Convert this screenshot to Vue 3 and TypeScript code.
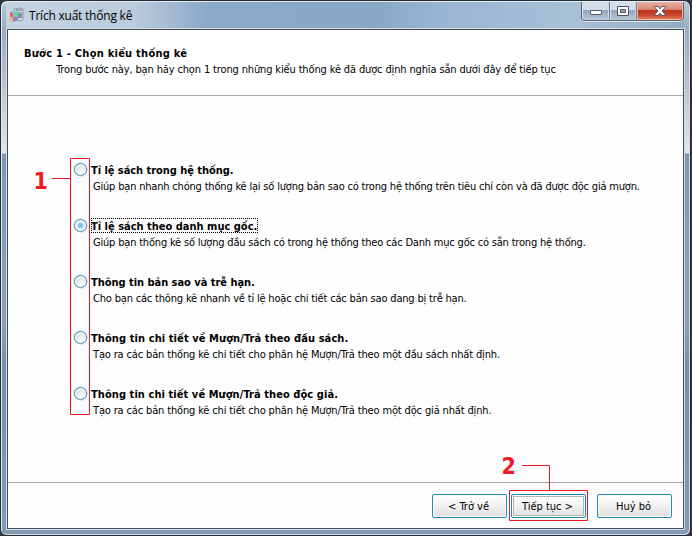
<script setup lang="ts">
import { ref } from 'vue'

interface ReportOption {
  id: string
  title: string
  description: string
}

const options: ReportOption[] = [
  { id: 'ratio', title: 'Tỉ lệ sách trong hệ thống.', description: 'Giúp bạn nhanh chóng thống kê lại số lượng bản sao có trong hệ thống trên tiêu chí còn và đã được độc giả mượn.' },
  { id: 'category', title: 'Tỉ lệ sách theo danh mục gốc.', description: 'Giúp bạn thống kê số lượng đầu sách có trong hệ thống theo các Danh mục gốc có sẵn trong hệ thống.' },
  { id: 'overdue', title: 'Thông tin bản sao và trễ hạn.', description: 'Cho bạn các thông kê nhanh về tỉ lệ hoặc chi tiết các bản sao đang bị trễ hạn.' },
  { id: 'by-title', title: 'Thông tin chi tiết về Mượn/Trả theo đầu sách.', description: 'Tạo ra các bản thống kê chi tiết cho phân hệ Mượn/Trả theo một đầu sách nhất định.' },
  { id: 'by-reader', title: 'Thông tin chi tiết về Mượn/Trả theo độc giả.', description: 'Tạo ra các bản thống kê chi tiết cho phân hệ Mượn/Trả theo một độc giả nhất định.' },
]

const selected = ref('category')
</script>

<template>
  <div class="window">
    <header class="titlebar">
      <svg class="app-icon" width="16" height="16" viewBox="0 0 16 16">
        <path d="M5 2l6-1 3 1v11l-4 1-5-2z" fill="#d4d9df" stroke="#77818f" stroke-width=".7" />
        <path d="M7 3h6M8 6h5" stroke="#67758c" />
        <rect x="8" y="7" width="5" height="4" fill="#8e88a5" />
        <path d="M1 5l5-2 3 2v8l-5 2-3-2z" fill="#8cc7dc" />
        <path d="M1 5l3 1v4H1z" fill="#ed5a77" />
        <path d="M1 10h3v5l-3-2z" fill="#e9b94c" />
        <path d="M4 6l5-1v5H4z" fill="#65d6a6" />
        <path d="M4 10h5v3l-5 2z" fill="#9d79d6" />
      </svg>
      <span class="caption">Trích xuất thống kê</span>
      <div class="controls">
        <button class="control minimize" aria-label="Minimize">
          <svg width="14" height="12" viewBox="0 0 14 12"><rect x="1.5" y="4.5" width="11" height="4" rx=".5" fill="#fff" stroke="#535666" /></svg>
        </button>
        <button class="control maximize" aria-label="Maximize">
          <svg width="14" height="12" viewBox="0 0 14 12"><path d="M1.5 1.500h11v9h-11zM4.500 4.500v3h5v-3z" fill="#fff" fill-rule="evenodd" stroke="#535666" /></svg>
        </button>
        <button class="control close" aria-label="Close">
          <svg width="14" height="12" viewBox="0 0 14 12"><path d="M2 1.500h3l2 2.300 2-2.300h3v1L9.200 6l2.800 3.500v1H9L7 8.200 5 10.500H2v-1L4.800 6 2 2.500z" fill="#fff" stroke="#535666" /></svg>
        </button>
      </div>
    </header>

    <main class="client">
      <section class="intro">
        <h1>Bước 1 - Chọn kiểu thống kê</h1>
        <p>Trong bước này, bạn hãy chọn 1 trong những kiểu thống kê đã được định nghĩa sẵn dưới đây để tiếp tục</p>
      </section>

      <section class="choices">
        <div v-for="option in options" :key="option.id" class="choice" :class="option.id" @click="selected = option.id">
          <span class="radio" :class="{ checked: selected === option.id }"></span>
          <div class="copy">
            <span class="label" :class="{ focused: selected === option.id }">{{ option.title }}</span>
            <span class="description">{{ option.description }}</span>
          </div>
        </div>
      </section>

      <footer class="actions">
        <button class="action"><span>&lt; Trở về</span></button>
        <button class="action primary"><span>Tiếp tục &gt;</span></button>
        <button class="action cancel"><span>Huỷ bỏ</span></button>
      </footer>
    </main>

    <svg class="annotations" width="692" height="536" viewBox="0 0 692 536">
      <path d="M52 178.500h18M70.500 158.500h19v256h-19zM522 465.500h27.500v25M509.500 490.500h78v30h-78z" />
      <text x="33.500" y="189">1</text>
      <text x="501.500" y="474">2</text>
    </svg>
  </div>
</template>

<style>
body { margin: 0; background: #33373c; overflow: hidden; }
</style>

<style scoped>
* { box-sizing: border-box; }
.window {
  position: relative;
  width: 691px;
  height: 536px;
  padding: 0 6px 5px 5px;
  border: 1px solid #252a30;
  border-radius: 7px 7px 6px 6px;
  background: linear-gradient(180deg, #bac9d9 0, #98adc3 28px, #b5c2d1 80px, #e3e6ec 152px, #8097b2 153px, #8ca0b9 320px, #7890a9 365px, #829bb4 536px);
  box-shadow: inset 1px 1px #e4edf5, inset -1px -1px #d0dce6;
  font-family: "DejaVu Sans Condensed", "DejaVu Sans", sans-serif;
  font-size: 11px;
  color: #000;
}
.titlebar {
  display: flex;
  height: 27px;
  margin: 1px 0 0;
  padding-left: 3px;
  background: linear-gradient(90deg, #c4d3e2 0, #b9cbdc 130px, #8ca9c7 200px, #89a7c4 370px, #9ab6d2 440px, #a8c0d7 570px, #94aac2 100%);
}
.app-icon { margin-top: 5px; }
.caption {
  margin: 5px 0 0 4px;
  font-family: "Open Sans", sans-serif;
  font-size: 12px;
  line-height: 17px;
  letter-spacing: -.22px;
  white-space: nowrap;
}
.controls {
  display: flex;
  width: 103px;
  height: 19px;
  margin-left: auto;
  border: 1px solid #5b6574;
  border-top: 0;
  border-radius: 0 0 4px 4px;
  overflow: hidden;
  box-shadow: 0 1px #dce6ef;
}
.control {
  display: flex;
  width: 28px;
  padding: 0;
  align-items: center;
  justify-content: center;
  border: 0;
  border-right: 1px solid #707e8e;
  background: linear-gradient(#d4dde7 0 45%, #94a4b7 46%, #b9c9d9 100%);
  box-shadow: inset 1px 0 #dce5ed, inset -1px 0 #cbd8e3;
}
.minimize svg { margin-top: 2px; }
.control svg { flex: none; }
.maximize { width: 27px; }
.close {
  width: 46px;
  border-right: 0;
  background: linear-gradient(#e6b0a5 0, #d88373 43%, #bd351c 47%, #c94a2c 75%, #e78c6d 100%);
  box-shadow: inset 1px 0 #edb7aa, inset -1px -1px #eeb7a5;
}
.client {
  display: flex;
  flex-direction: column;
  width: 677px;
  height: 500px;
  margin-left: 1px;
  border: 1px solid #414d59;
  background: #fdfdfd;
  box-shadow: 0 0 0 1px #d5dfe8;
}
.intro {
  height: 66px;
  padding: 16px 0 0 16px;
  border-bottom: 1px solid #a7a7a7;
  background: #fff;
  white-space: nowrap;
}
h1 { margin: 0; font-size: 11px; line-height: 16px; letter-spacing: .25px; }
p { margin: 0 0 0 32px; line-height: 15px; letter-spacing: -.14px; }
.choices { flex: 1; padding: 66px 0 0 66px; }
.choice { display: flex; height: 56px; }
.radio {
  flex: none;
  width: 13px;
  height: 13px;
  margin-top: 1px;
  border: 1px solid #4e94b8;
  border-radius: 50%;
  background: linear-gradient(145deg, #d4d8dc, #fafafa 75%);
  box-shadow: inset 0 0 0 1px #f4f8fa, 0 0 0 .5px #a6c9da;
}
.radio.checked { background: radial-gradient(circle, #7dbcee 0 1.5px, #a5d1f3 2.5px, #eaf2f7 3.5px); }
.copy { display: flex; flex-direction: column; align-items: flex-start; margin-left: 4px; white-space: nowrap; }
.label {
  height: 15px;
  font-weight: bold;
  line-height: 16px;
  border: 1px dotted transparent;
  border-left-width: 0;
}
.label.focused { border: 1px dotted #000; text-indent: -1px; }
.ratio .label { letter-spacing: -.05px; }
.overdue .label { letter-spacing: -.03px; }
.by-title .label { letter-spacing: .09px; }
.by-reader .label { letter-spacing: .07px; }
.description { margin: 2px 0 0 2px; line-height: 16px; letter-spacing: -.19px; }
.overdue .description { letter-spacing: -.18px; }
.by-title .description, .by-reader .description { letter-spacing: -.15px; }
.actions { display: flex; height: 46px; padding: 11px 0 0 424px; border-top: 1px solid #a7a7a7; }
.action {
  width: 75px;
  height: 24px;
  margin-right: 4px;
  padding: 0;
  border: 1px solid #2589b7;
  border-radius: 2px;
  background: linear-gradient(#fff, #f3f3f3 45%, #dedede);
  box-shadow: inset 0 0 0 1px #fafafa;
  font: inherit;
  letter-spacing: 0;
  color: #000;
}
.action span { margin-right: 2px; }
.primary { margin-right: 11px; box-shadow: inset 0 0 0 1px #fff, inset 0 0 0 2px #b2b6b9; }
.annotations { position: absolute; left: -1px; top: -1px; pointer-events: none; }
.annotations path { fill: none; stroke: #ed1c24; }
.annotations text { fill: #ed1c24; font: bold 23px "DejaVu Sans Condensed", "DejaVu Sans", sans-serif; }
</style>
